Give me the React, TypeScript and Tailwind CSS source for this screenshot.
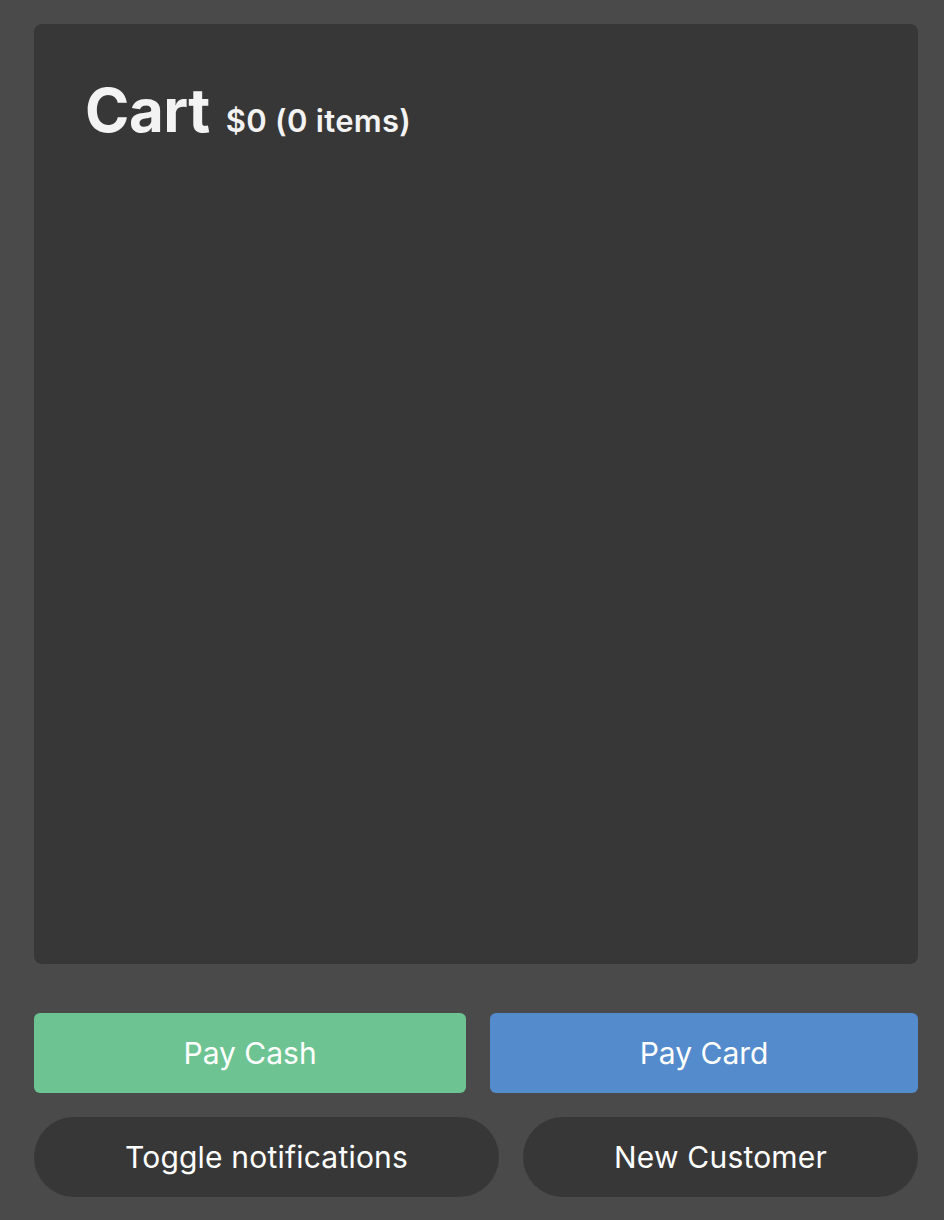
const font = { fontFamily: 'Inter, "Liberation Sans", sans-serif' }

const App = () => {
    return (
        <div className="min-h-[1220px] bg-[#4a4a4a] pt-6 pb-[23px] pl-[34px] pr-[26px] flex flex-col" style={font}>
            <div className="h-[940px] rounded-lg bg-[#373737] pl-[51px] pt-[56px]">
                <h1 className="flex items-baseline gap-4 text-[#f3f3f3] leading-none">
                    <span className="text-[60px] font-bold tracking-[-0.5px]">Cart</span>
                    <span className="text-[31px] font-semibold tracking-[0.3px]">$0 (0 items)</span>
                </h1>
            </div>

            <div className="mt-[49px] flex gap-6">
                <button className="flex-auto h-20 rounded-md bg-[#6dc492] text-white text-[30px]">Pay Cash</button>
                <button className="flex-auto h-20 rounded-md bg-[#538bcc] text-white text-[30px]">Pay Card</button>
            </div>
            <div className="mt-6 flex gap-6">
                <button className="flex-auto h-20 rounded-full bg-[#373737] text-white text-[30px] tracking-[0.2px]">Toggle notifications</button>
                <button className="flex-auto h-20 rounded-full bg-[#373737] text-white text-[30px] tracking-[0.2px]">New Customer</button>
            </div>
        </div>
    )
}

export default App
